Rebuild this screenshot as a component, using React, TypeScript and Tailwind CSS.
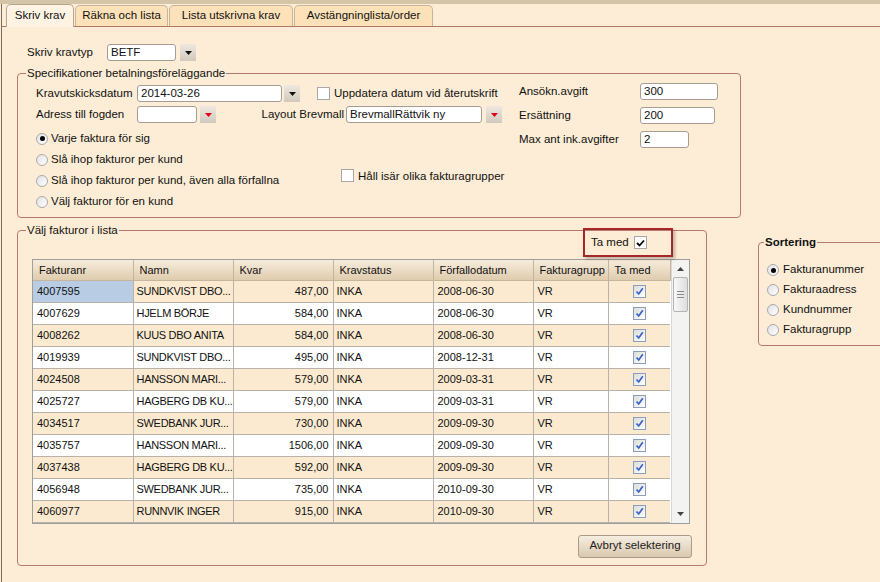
import React from "react";

const rows = [
  ["4007595", "SUNDKVIST DBO...", "487,00", "INKA", "2008-06-30", "VR"],
  ["4007629", "HJELM BÖRJE", "584,00", "INKA", "2008-06-30", "VR"],
  ["4008262", "KUUS DBO ANITA", "584,00", "INKA", "2008-06-30", "VR"],
  ["4019939", "SUNDKVIST DBO...", "495,00", "INKA", "2008-12-31", "VR"],
  ["4024508", "HANSSON MARI...", "579,00", "INKA", "2009-03-31", "VR"],
  ["4025727", "HAGBERG DB KU...", "579,00", "INKA", "2009-03-31", "VR"],
  ["4034517", "SWEDBANK JUR...", "730,00", "INKA", "2009-09-30", "VR"],
  ["4035757", "HANSSON MARI...", "1506,00", "INKA", "2009-09-30", "VR"],
  ["4037438", "HAGBERG DB KU...", "592,00", "INKA", "2009-09-30", "VR"],
  ["4056948", "SWEDBANK JUR...", "735,00", "INKA", "2010-09-30", "VR"],
  ["4060977", "RUNNVIK INGER", "915,00", "INKA", "2010-09-30", "VR"],
];

const headers = ["Fakturanr", "Namn", "Kvar", "Kravstatus", "Förfallodatum", "Fakturagrupp", "Ta med"];

function DropButton({ red }: { red?: boolean }) {
  return (
    <div className="flex h-[17px] w-[16px] items-center justify-center bg-gradient-to-b from-[#eee8e0] to-[#d2c9bd]">
      <svg width="7" height="4" viewBox="0 0 7 4">
        <path d="M0 0h7L3.5 4z" fill={red ? "#e3001c" : "#111"} />
      </svg>
    </div>
  );
}

function Field({ value, className }: { value?: string; className: string }) {
  return (
    <div className={`h-[17px] rounded-[3px] border border-[#a59d93] bg-white px-[3px] leading-[15px] ${className}`}>
      {value}
    </div>
  );
}

function Radio({ checked }: { checked?: boolean }) {
  return (
    <span className="flex h-[12px] w-[12px] shrink-0 items-center justify-center rounded-full border border-[#a9a9a9] bg-gradient-to-br from-[#e2e2e2] to-white">
      {checked && <span className="h-[5px] w-[5px] rounded-full bg-black" />}
    </span>
  );
}

function Check({ checked }: { checked?: boolean }) {
  return (
    <span className="flex h-[13px] w-[13px] shrink-0 items-center justify-center border border-[#a8a8a8] bg-white">
      {checked && (
        <svg width="9" height="8" viewBox="0 0 9 8">
          <path d="M1 4l2.5 2.5L8 1.5" fill="none" stroke="#000" strokeWidth="1.8" />
        </svg>
      )}
    </span>
  );
}

function BlueCheck() {
  return (
    <span className="flex h-[13px] w-[13px] items-center justify-center border border-[#8b9fbc] bg-gradient-to-br from-[#dcdcd8] to-white">
      <svg width="9" height="9" viewBox="0 0 9 9">
        <path d="M1.5 4.5l2.2 2.5L7.8 1.2" fill="none" stroke="#3b62c8" strokeWidth="1.7" />
      </svg>
    </span>
  );
}

export default function App() {
  return (
    <div className="h-[582px] w-[880px] overflow-hidden bg-[#fdedd6] font-['Liberation_Sans',Arial,sans-serif] text-[11.5px] text-[#111]">
      <div className="h-[4px] bg-[#d5c5a8]" />
      <div className="ml-[1px] h-[578px] border-l border-[#7d6c5c]">
        {/* tabs */}
        <div className="flex h-[23px] items-end border-b border-[#b27565] pl-[4px]">
          <div className="relative z-10 -mb-px flex h-[23px] w-[68px] items-center justify-center rounded-t-[5px] border border-b-0 border-[#b8a68c] bg-[#fff4e4]">
            Skriv krav
          </div>
          <div className="ml-[1px] flex h-[21px] w-[93px] items-center justify-center rounded-t-[5px] border border-b-0 border-[#c6b59b] bg-[#fde1b9]">
            Räkna och lista
          </div>
          <div className="ml-[1px] flex h-[21px] w-[124px] items-center justify-center rounded-t-[5px] border border-b-0 border-[#c6b59b] bg-[#fde1b9]">
            Lista utskrivna krav
          </div>
          <div className="ml-[1px] flex h-[21px] w-[139px] items-center justify-center rounded-t-[5px] border border-b-0 border-[#c6b59b] bg-[#fde1b9]">
            Avstängninglista/order
          </div>
        </div>

        {/* Skriv kravtyp */}
        <div className="ml-[25px] mt-[17px] flex h-[17px] items-center">
          <span className="w-[80px]">Skriv kravtyp</span>
          <Field value="BETF" className="w-[69px]" />
          <div className="ml-[4px]">
            <DropButton />
          </div>
        </div>

        {/* Specifikationer */}
        <fieldset className="ml-[15px] mt-[5px] w-[724px] rounded-[4px] border border-[#b7796b] pb-[5px] pl-[18px] pt-[3px]">
          <legend className="-ml-[10px] px-[1px] leading-[14px]">Specifikationer betalningsföreläggande</legend>
          <div className="flex">
            <div className="w-[483px] pt-[2px]">
              <div className="flex h-[17px] items-center">
                <span className="w-[101px]">Kravutskicksdatum</span>
                <Field value="2014-03-26" className="w-[145px]" />
                <div className="ml-[2px]">
                  <DropButton />
                </div>
                <div className="ml-[17px] flex items-center gap-[4px]">
                  <Check />
                  <span>Uppdatera datum vid återutskrift</span>
                </div>
              </div>
              <div className="mt-[4px] flex h-[17px] items-center">
                <span className="w-[101px]">Adress till fogden</span>
                <Field className="w-[60px]" />
                <div className="ml-[3px]">
                  <DropButton red />
                </div>
                <span className="w-[130px] pr-[2px] text-right">Layout Brevmall</span>
                <Field value="BrevmallRättvik ny" className="w-[136px]" />
                <div className="ml-[4px]">
                  <DropButton red />
                </div>
              </div>
              <div className="mt-[5px] flex">
                <div className="w-[305px]">
                  {[
                    "Varje faktura för sig",
                    "Slå ihop fakturor per kund",
                    "Slå ihop fakturor per kund, även alla förfallna",
                    "Välj fakturor för en kund",
                  ].map((t, i) => (
                    <div key={t} className="flex h-[21px] items-center gap-[3px]">
                      <Radio checked={i === 0} />
                      <span>{t}</span>
                    </div>
                  ))}
                </div>
                <div className="flex items-start gap-[4px] pt-[41px]">
                  <Check />
                  <span className="leading-[14px]">Håll isär olika fakturagrupper</span>
                </div>
              </div>
            </div>
            <div className="flex flex-col gap-[7px]">
              <div className="flex h-[17px] items-center">
                <span className="w-[121px]">Ansökn.avgift</span>
                <Field value="300" className="w-[78px]" />
              </div>
              <div className="flex h-[17px] items-center">
                <span className="w-[121px]">Ersättning</span>
                <Field value="200" className="w-[75px]" />
              </div>
              <div className="flex h-[17px] items-center">
                <span className="w-[121px]">Max ant ink.avgifter</span>
                <Field value="2" className="w-[49px]" />
              </div>
            </div>
          </div>
        </fieldset>

        <div className="mt-[5px] flex items-start">
          {/* Välj fakturor i lista */}
          <fieldset className="relative ml-[15px] w-[690px] shrink-0 rounded-[4px] border border-[#b7796b] pb-[7px] pl-[14px] pt-[22px]">
            <legend className="-ml-[6px] px-[1px] leading-[14px]">Välj fakturor i lista</legend>
            <div className="absolute -top-[9px] left-[565px] flex h-[29px] w-[90px] items-center border-2 border-[#a3272b] pl-[6px] shadow-[2px_2px_3px_rgba(0,0,0,0.25)]">
              <span className="mr-[5px]">Ta med</span>
              <Check checked />
            </div>
            <div className="flex w-[658px] border border-[#9e9e9e] bg-white text-[11px]">
              <table className="w-[637px] table-fixed border-collapse">
                <colgroup>
                  <col className="w-[100px]" />
                  <col className="w-[100px]" />
                  <col className="w-[100px]" />
                  <col className="w-[100px]" />
                  <col className="w-[100px]" />
                  <col className="w-[75px]" />
                  <col className="w-[62px]" />
                </colgroup>
                <thead>
                  <tr className="h-[20px] bg-gradient-to-b from-[#f7ecdc] to-[#dfccae]">
                    {headers.map((h) => (
                      <th key={h} className="whitespace-nowrap border-b border-r border-[#c5b59c] pl-[6px] text-left font-normal">
                        {h}
                      </th>
                    ))}
                  </tr>
                </thead>
                <tbody>
                  {rows.map((r, i) => (
                    <tr key={r[0]} className={`h-[22px] ${i % 2 === 0 ? "bg-[#fcead0]" : "bg-white"}`}>
                      <td className={`border-b border-r border-[#b8b2aa] pl-[4px] ${i === 0 ? "bg-[#b8cce4]" : ""}`}>{r[0]}</td>
                      <td className="overflow-hidden whitespace-nowrap border-b border-r border-[#b8b2aa] pl-[3px] tracking-[-0.3px]">
                        {r[1]}
                      </td>
                      <td className="border-b border-r border-[#b8b2aa] pr-[4px] text-right">{r[2]}</td>
                      <td className="border-b border-r border-[#b8b2aa] pl-[3px]">{r[3]}</td>
                      <td className="border-b border-r border-[#b8b2aa] pl-[4px]">{r[4]}</td>
                      <td className="border-b border-r border-[#b8b2aa] pl-[4px]">{r[5]}</td>
                      <td className="border-b border-[#b8b2aa]">
                        <div className="flex justify-center">
                          <BlueCheck />
                        </div>
                      </td>
                    </tr>
                  ))}
                </tbody>
              </table>
              {/* scrollbar */}
              <div className="flex w-[19px] flex-col border-l border-[#d8d8d8] bg-[#f3f3f2]">
                <div className="flex h-[17px] items-center justify-center">
                  <svg width="7" height="4" viewBox="0 0 7 4">
                    <path d="M0 4L3.5 0 7 4z" fill="#444" />
                  </svg>
                </div>
                <div className="mx-[1px] flex h-[35px] flex-col items-center justify-center gap-[2px] rounded-[2px] border border-[#b4b4b4] bg-gradient-to-r from-[#f8f8f8] to-[#dedede]">
                  <span className="h-px w-[7px] bg-[#8a8a8a]" />
                  <span className="h-px w-[7px] bg-[#8a8a8a]" />
                  <span className="h-px w-[7px] bg-[#8a8a8a]" />
                </div>
                <div className="flex-1" />
                <div className="flex h-[17px] items-center justify-center">
                  <svg width="7" height="4" viewBox="0 0 7 4">
                    <path d="M0 0h7L3.5 4z" fill="#444" />
                  </svg>
                </div>
              </div>
            </div>
            <div className="mr-[14px] mt-[11px] flex justify-end">
              <button className="h-[23px] w-[114px] rounded-[3px] border border-[#aa9b8a] bg-gradient-to-b from-[#f6eee2] to-[#dac8ad] text-[#222]">
                Avbryt selektering
              </button>
            </div>
          </fieldset>

          {/* Sortering */}
          <fieldset className="ml-[51px] mt-[12px] w-[140px] shrink-0 rounded-[4px] border border-[#b7796b] pb-[5px] pl-[8px] pt-[11px]">
            <legend className="-ml-[3px] px-[1px] font-bold leading-[14px]">Sortering</legend>
            {["Fakturanummer", "Fakturaadress", "Kundnummer", "Fakturagrupp"].map((t, i) => (
              <div key={t} className="flex h-[20px] items-center gap-[4px]">
                <Radio checked={i === 0} />
                <span>{t}</span>
              </div>
            ))}
          </fieldset>
        </div>
      </div>
    </div>
  );
}
